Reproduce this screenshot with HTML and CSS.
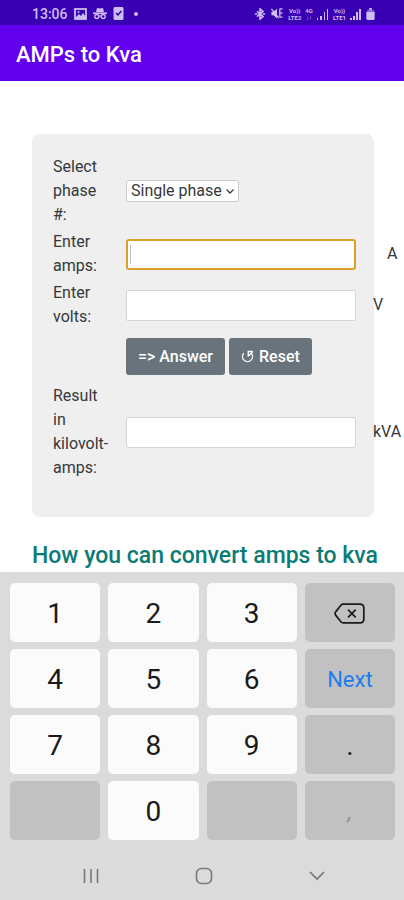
FILE: index.html
```html
<!DOCTYPE html>
<html lang="en">
<head>
<meta charset="utf-8">
<meta name="viewport" content="width=device-width, initial-scale=1">
<title>AMPs to Kva</title>
<link rel="stylesheet" href="styles.css">
</head>
<body>
<div class="screen">
  <div class="status-bar">
    <div class="status-group">
      <span class="clock">13:06</span>
      <svg width="13" height="12" viewBox="0 0 13 12" fill="none" stroke="currentColor"><rect x="1" y="1" width="11" height="10" stroke-width="1.8"/><path d="M2 9l3-3 2 2 2-3 3 4v2H2z" fill="currentColor" stroke="none"/><circle cx="4.500" cy="4" r="1" fill="currentColor" stroke="none"/></svg>
      <svg width="14" height="13" viewBox="0 0 14 13" fill="none" stroke="currentColor"><path d="M4 1l3 .6L10 1l1 4H3z" fill="currentColor" stroke="none"/><path d="M0 6.200h14" stroke-width="1.600"/><circle cx="3.800" cy="9.500" r="2" stroke-width="1.400"/><circle cx="10.200" cy="9.500" r="2" stroke-width="1.400"/><path d="M6 9h2"/></svg>
      <svg width="11" height="13" viewBox="0 0 11 13"><path fill="currentColor" fill-rule="evenodd" d="M1.500 0h8l1 1v11l-1 1h-8l-1-1V1zM2.500 6.500l2.500 2.500 4-4.500-1.200-1L5 6.800 3.700 5.500z"/></svg>
      <svg class="dot" width="4" height="4" viewBox="0 0 4 4"><circle cx="2" cy="2" r="2" fill="currentColor"/></svg>
    </div>
    <div class="status-group status-right">
      <svg width="12" height="12" viewBox="0 0 12 14" fill="none" stroke="currentColor" stroke-width="1.800"><path d="M2.500 4l7 6L6 13V1l3.500 3-7 6"/><path d="M0 7h3M9 7h3"/></svg>
      <svg width="14" height="13" viewBox="0 0 14 14" fill="none" stroke="currentColor" stroke-width="1.400"><path d="M1 5h2l4-3v10L3 9H1z" fill="currentColor" stroke="none"/><path d="M1 2l8 10M10 2h3M10 6.500h3M10 11h3M10 2v9"/></svg>
      <span class="network"><span>Vo))</span><span>LTE2</span></span>
      <span class="network"><span>4G</span><span>↓↑</span></span>
      <svg width="12" height="12" viewBox="0 0 12 12" fill="currentColor"><path d="M0 10h1v2H0zM3 8h2v4H3zM7 4h1v8H7zM10 1h1v11h-1z"/></svg>
      <span class="network"><span>Vo))</span><span>LTE1</span></span>
      <svg width="12" height="12" viewBox="0 0 12 12" fill="currentColor"><path d="M0 10h2v2H0zM3 8h2v4H3zM6 4h2v8H6zM9 1h2v11H9z"/></svg>
      <svg width="9" height="12" viewBox="0 0 9 13" fill="currentColor"><path d="M3 0h3v2H3z"/><path d="M1 2h7v2H1z" opacity=".55"/><path d="M0 4h9v8l-1 1H1l-1-1z"/></svg>
    </div>
  </div>

  <header class="app-bar"><h1>AMPs to Kva</h1></header>

  <main class="content">
    <form class="calculator" onsubmit="return false">
      <div class="row">
        <label for="phase">Select phase #:</label>
        <div class="select-box">
          <select id="phase"><option>Single phase</option><option>Three phase</option></select>
          <svg class="chevron" width="8" height="5" viewBox="0 0 8 5" fill="none" stroke="currentColor" stroke-width="1.300"><path d="M.5.5L4 4 7.500.5"/></svg>
        </div>
      </div>
      <div class="row">
        <label for="amps">Enter amps:</label>
        <div class="active-field"><input class="field active" id="amps" type="text" inputmode="decimal"></div>
        <span class="unit indented">A</span>
      </div>
      <div class="row">
        <label for="volts">Enter volts:</label>
        <input class="field" id="volts" type="text" inputmode="decimal">
        <span class="unit">V</span>
      </div>
      <div class="row actions-row">
        <div class="actions">
          <button class="action" type="submit">=&gt; Answer</button>
          <button class="action" type="reset"><svg width="13" height="14" viewBox="0 0 13 14" fill="none" stroke="currentColor" stroke-width="1.300"><path d="M2.800 3.200a5 5 0 1 0 7.400 0"/><path d="M12 1.500H7.200v5M7.500 6l4-4"/></svg>Reset</button>
        </div>
      </div>
      <div class="row">
        <label for="result">Result in kilovolt-amps:</label>
        <input class="field" id="result" type="text" readonly>
        <span class="unit">kVA</span>
      </div>
    </form>
    <h2>How you can convert amps to kva</h2>
  </main>

  <section class="keyboard" aria-label="Number keyboard">
    <div class="keys">
      <button class="key">1</button><button class="key">2</button><button class="key">3</button>
      <button class="key dark" aria-label="Backspace"><svg width="31" height="21" viewBox="0 0 32 22" fill="none" stroke="currentColor" stroke-width="1.800"><path d="M9.500 1.200H27q4 0 4 4v11.600q0 4-4 4H9.500q-1.500 0-2.500-1.200L1.700 13q-1.500-2 0-4L7 2.400q1-1.200 2.500-1.200z"/><path d="M14.500 7l8 8M22.500 7l-8 8"/></svg></button>
      <button class="key">4</button><button class="key">5</button><button class="key">6</button>
      <button class="key dark next">Next</button>
      <button class="key">7</button><button class="key">8</button><button class="key">9</button>
      <button class="key dark">.</button>
      <button class="key dark" aria-label="Blank" disabled></button><button class="key">0</button><button class="key dark" aria-label="Blank" disabled></button>
      <button class="key dark comma" disabled>,</button>
    </div>
    <nav class="system-nav">
      <button aria-label="Recent apps"><svg width="16" height="16" viewBox="0 0 16 16" stroke="currentColor" stroke-width="1.600"><path d="M1.500 1v14M8 1v14M14.500 1v14"/></svg></button>
      <button aria-label="Home"><svg width="18" height="18" viewBox="0 0 18 18" fill="none" stroke="currentColor" stroke-width="1.600"><rect x="1.500" y="1.500" width="15" height="15" rx="5"/></svg></button>
      <button aria-label="Hide keyboard"><svg width="16" height="10" viewBox="0 0 16 10" fill="none" stroke="currentColor" stroke-width="1.700"><path d="M1 1l7 7 7-7"/></svg></button>
    </nav>
  </section>
</div>
</body>
</html>
```
FILE: styles.css
```css
* { box-sizing: border-box; }

body {
  margin: 0;
  background: #fff;
  color: #35383b;
  font: 16px/24px Roboto, sans-serif;
}

button, input, select { font: inherit; }
button { border: 0; padding: 0; }
svg { display: block; flex: none; }

.screen {
  display: flex;
  flex-direction: column;
  min-height: 100vh;
}

.status-bar {
  display: flex;
  align-items: center;
  justify-content: space-between;
  height: 25px;
  padding: 2px 29px 0 32px;
  background: #3900b3;
  color: #cdbdf0;
}

.status-group {
  display: flex;
  align-items: center;
  gap: 6px;
}

.status-right { gap: 4px; }
.dot { margin-left: 4px; }

.clock {
  font-size: 14px;
  font-weight: 500;
}

.network {
  display: flex;
  flex-direction: column;
  align-items: center;
  font-size: 6px;
  font-weight: 700;
  line-height: 7px;
}

.app-bar {
  display: flex;
  align-items: center;
  height: 56px;
  padding: 4px 16px 0;
  background: #6200ee;
  color: #fff;
}

h1 {
  margin: 0;
  font-size: 22px;
  font-weight: 500;
}

.content {
  flex: 1;
  padding: 53px 30px 0 32px;
}

.calculator {
  padding: 19px 0 36px 21px;
  border-radius: 8px;
  background: #efefef;
}

.row {
  display: grid;
  grid-template-columns: 56px 230px 28px;
  column-gap: 17px;
  align-items: center;
  padding: 2px 0 1px;
}

.select-box {
  position: relative;
  justify-self: start;
}

select {
  display: block;
  appearance: none;
  height: 22px;
  padding: 0 16px 0 4px;
  border: 1px solid #c9cbcd;
  border-radius: 3px;
  background: #fff;
  color: inherit;
  line-height: 20px;
}

.chevron {
  position: absolute;
  top: 9px;
  right: 5px;
  pointer-events: none;
}

.field {
  display: block;
  width: 100%;
  height: 31px;
  padding: 2px 4px;
  border: 1px solid #d2d4d6;
  border-radius: 2px;
  background: #fff;
  color: inherit;
}

.field.active {
  border: 2px solid #dca028;
  border-radius: 3px;
}

.active-field { position: relative; }

.active-field::after {
  content: "";
  position: absolute;
  top: 6px;
  left: 4px;
  width: 1px;
  height: 19px;
  background: #bbb;
}

.unit { white-space: nowrap; }
.unit.indented { padding-left: 14px; }

.actions-row { padding: 8px 0 7px; }

.actions {
  display: flex;
  grid-column: 2;
  gap: 4px;
}

.action {
  display: flex;
  align-items: center;
  gap: 5px;
  height: 37px;
  padding: 0 12px;
  border-radius: 3px;
  background: #68737b;
  color: #fff;
  font-weight: 500;
}

h2 {
  margin: 26px 0 3px;
  color: #0b7c74;
  font-size: 23px;
  font-weight: 500;
  line-height: 26px;
  white-space: nowrap;
}

.keyboard { background: #dbdbdb; }

.keys {
  display: grid;
  grid-template-columns: repeat(4, 1fr);
  gap: 7px 8px;
  padding: 11px 9px 0 10px;
}

.key {
  display: flex;
  align-items: center;
  justify-content: center;
  height: 59px;
  padding-top: 2px;
  border-radius: 5px;
  background: #fbfbfb;
  color: #1a1a1a;
  font-size: 28px;
}

.key.dark { background: #c1c1c1; }
.key.next { color: #1a7df0; font-size: 22px; }
.key.comma { color: #929292; font-size: 22px; font-style: italic; }

.system-nav {
  display: grid;
  grid-template-columns: repeat(3, 1fr);
  height: 60px;
  padding: 12px 31px 0 34px;
}

.system-nav button {
  display: flex;
  align-items: center;
  justify-content: center;
  background: none;
  color: #777;
}
```
